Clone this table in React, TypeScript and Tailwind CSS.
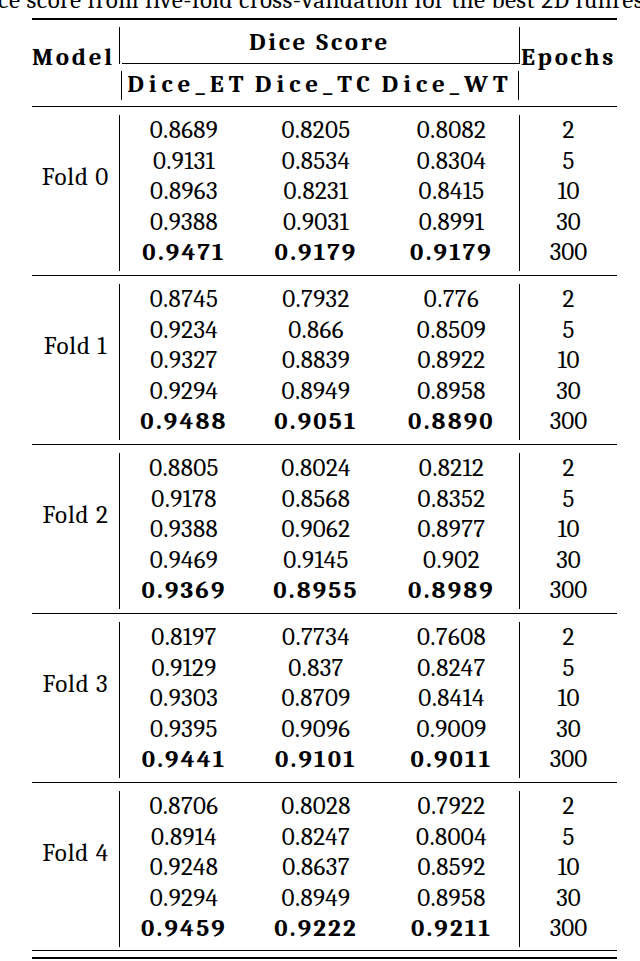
const folds = [
  {
    name: "Fold 0",
    rows: [
      ["0.8689", "0.8205", "0.8082", "2"],
      ["0.9131", "0.8534", "0.8304", "5"],
      ["0.8963", "0.8231", "0.8415", "10"],
      ["0.9388", "0.9031", "0.8991", "30"],
      ["0.9471", "0.9179", "0.9179", "300"],
    ],
  },
  {
    name: "Fold 1",
    rows: [
      ["0.8745", "0.7932", "0.776", "2"],
      ["0.9234", "0.866", "0.8509", "5"],
      ["0.9327", "0.8839", "0.8922", "10"],
      ["0.9294", "0.8949", "0.8958", "30"],
      ["0.9488", "0.9051", "0.8890", "300"],
    ],
  },
  {
    name: "Fold 2",
    rows: [
      ["0.8805", "0.8024", "0.8212", "2"],
      ["0.9178", "0.8568", "0.8352", "5"],
      ["0.9388", "0.9062", "0.8977", "10"],
      ["0.9469", "0.9145", "0.902", "30"],
      ["0.9369", "0.8955", "0.8989", "300"],
    ],
  },
  {
    name: "Fold 3",
    rows: [
      ["0.8197", "0.7734", "0.7608", "2"],
      ["0.9129", "0.837", "0.8247", "5"],
      ["0.9303", "0.8709", "0.8414", "10"],
      ["0.9395", "0.9096", "0.9009", "30"],
      ["0.9441", "0.9101", "0.9011", "300"],
    ],
  },
  {
    name: "Fold 4",
    rows: [
      ["0.8706", "0.8028", "0.7922", "2"],
      ["0.8914", "0.8247", "0.8004", "5"],
      ["0.9248", "0.8637", "0.8592", "10"],
      ["0.9294", "0.8949", "0.8958", "30"],
      ["0.9459", "0.9222", "0.9211", "300"],
    ],
  },
];

const Num = ({ v, best }: { v: string; best: boolean }) => (
  <span className={best ? "font-bold tracking-[2.2px]" : "tracking-[0.4px]"}>{v}</span>
);

const FoldBlock = ({ name, rows, last }: { name: string; rows: string[][]; last: boolean }) => {
  return (
    <div className={last ? "flex h-[167px]" : "flex h-[168px]"}>
      <div className="w-[87px] pt-[55px] text-center leading-[30.5px] tracking-[0.9px]">{name}</div>
      <div className="w-[401px] mt-[8px] h-[156px] border-x border-black">
        {rows.map((r, i) => (
          <div key={i} className="grid grid-cols-[128px_136px_135px] text-center leading-[30.5px]">
            <Num v={r[0]} best={i === 4} />
            <Num v={r[1]} best={i === 4} />
            <Num v={r[2]} best={i === 4} />
          </div>
        ))}
      </div>
      <div className="w-[97px] mt-[8px] text-center">
        {rows.map((r, i) => (
          <div key={i} className="leading-[30.5px]">{r[3]}</div>
        ))}
      </div>
    </div>
  );
};

export default function App() {
  return (
    <div className="w-[640px] h-[961px] overflow-hidden bg-white text-black font-serif [font-family:Liberation_Serif,Times_New_Roman,serif] text-[25px]">
      <div className="h-[18px] flow-root">
        <div className="-mt-[13px] -ml-[2px] whitespace-nowrap leading-none tracking-[0.45px]">
          ce score from five-fold cross-validation for the best 2D fullres
        </div>
      </div>
      <div className="ml-[32px] w-[585px]">
        <div className="h-[2px] bg-black" />
        <div className="flex h-[86px] font-bold leading-none tracking-[2.7px]">
          <div className="w-[87px] pt-[24px]">Model</div>
          <div className="w-[401px] pt-[7px]">
            <div className="h-[37px] border-x border-black flex flex-col justify-between">
              <div className="pt-[2px] text-center">Dice Score</div>
              <div className="ml-[2px] h-px bg-black" />
            </div>
            <div className="mt-[7px] ml-[2px] w-[398px] h-[29px] border-x border-black text-center whitespace-nowrap tracking-[5px] [word-spacing:-4px]">
              Dice_ET Dice_TC Dice_WT
            </div>
          </div>
          <div className="w-[97px] pt-[24px] text-center">Epochs</div>
        </div>
        <div className="h-px bg-black" />
        {folds.map((f, i) => (
          <div key={f.name}>
            <FoldBlock name={f.name} rows={f.rows} last={i === folds.length - 1} />
            <div className="h-px bg-black" />
          </div>
        ))}
        <div className="mt-[6px] h-[2px] bg-black" />
      </div>
    </div>
  );
}
